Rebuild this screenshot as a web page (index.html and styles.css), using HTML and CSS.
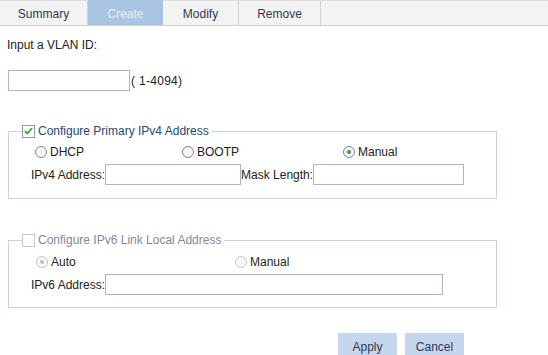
FILE: index.html
```html
<!DOCTYPE html>
<html>
  <head>
    <title>VLAN Interface</title>
    <link rel="stylesheet" href="styles.css">
  </head>
  <body>
    <div class="tabs">
      <div class="tab tab-summary">Summary</div>
      <div class="tab tab-create active">Create</div>
      <div class="tab tab-modify">Modify</div>
      <div class="tab tab-remove">Remove</div>
      <div class="tab-fill"></div>
    </div>

    <div class="content">
      <div class="prompt">Input a VLAN ID:</div>
      <div class="vlan-row">
        <input type="text" class="vlan-input" />
        <span class="hint">( 1-4094)</span>
      </div>

      <fieldset class="group group-v4">
        <legend>
          <span class="check checked">
            <svg width="9" height="8" viewBox="0 0 9 8"><path d="M1 4 L3.5 6.5 L8 1" fill="none" stroke="#3aa53a" stroke-width="1.8"/></svg>
          </span>
          Configure Primary IPv4 Address
        </legend>
        <div class="radios">
          <label class="radio r-dhcp"><span class="dot"></span>DHCP</label>
          <label class="radio r-bootp"><span class="dot"></span>BOOTP</label>
          <label class="radio r-manual"><span class="dot on"></span>Manual</label>
        </div>
        <div class="field-row">
          <span class="label">IPv4 Address:</span>
          <input type="text" class="ip-input" />
          <span class="label">Mask Length:</span>
          <input type="text" class="mask-input" />
        </div>
      </fieldset>

      <fieldset class="group group-v6 disabled">
        <legend>
          <span class="check"></span>
          Configure IPv6 Link Local Address
        </legend>
        <div class="radios">
          <label class="radio r-auto"><span class="dot dim on"></span>Auto</label>
          <label class="radio r-manual6"><span class="dot dim"></span>Manual</label>
        </div>
        <div class="field-row">
          <span class="label">IPv6 Address:</span>
          <input type="text" class="ip6-input" />
        </div>
      </fieldset>

      <div class="actions">
        <button class="btn">Apply</button>
        <button class="btn">Cancel</button>
      </div>
    </div>
  </body>
</html>
```

FILE: styles.css
```css
body {
  margin: 0;
  font-family: "Liberation Sans", Arial, sans-serif;
  font-size: 12px;
  color: #222;
  background: #fff;
}

.tabs {
  display: flex;
  height: 26px;
  background: #f3f3f3;
  border-top: 1px solid #dcdcdc;
  border-bottom: 1px solid #cfcfcf;
  box-sizing: border-box;
}

.tab {
  display: flex;
  align-items: center;
  justify-content: center;
  color: #2d3a56;
  border-right: 1px solid #d0d0d0;
  padding-top: 2px;
  box-sizing: border-box;
}

.tab-summary { width: 88px; }
.tab-create { width: 75px; }
.tab-modify { width: 76px; }
.tab-remove { width: 82px; }
.tab-fill { flex: 1; }

.tab.active {
  background: #a9c3e3;
  color: #e8eef7;
  border-right: none;
  margin-top: -1px;
}

.content {
  padding: 0 0 0 8px;
}

.prompt {
  margin-top: 12px;
  margin-left: -1px;
  height: 14px;
}

.vlan-row {
  display: flex;
  align-items: center;
  margin-top: 18px;
}

input[type="text"] {
  height: 21px;
  box-sizing: border-box;
  border: 1px solid #a7b6cb;
  margin: 0;
  padding: 0;
  background: #fff;
}

.vlan-input { width: 122px; height: 22px; }

.hint {
  margin-left: 1px;
  letter-spacing: 0.3px;
}

.group {
  width: 489px;
  box-sizing: border-box;
  margin: 0;
  border: 1px solid #c6d3e6;
  padding: 0 0 13px 22px;
}

.group-v4 {
  margin-top: 33px;
}

.group-v6 {
  margin-top: 34px;
  padding-bottom: 12px;
}

legend {
  padding: 0 3px 0 0;
  margin-left: -9px;
  color: #27457f;
  display: flex;
  align-items: center;
}

.disabled legend { color: #7f8aa0; }

.check {
  width: 11px;
  height: 11px;
  border: 1px solid #8b9bb3;
  background: #fff;
  margin-right: 3px;
  display: inline-flex;
  align-items: center;
  justify-content: center;
}

.disabled .check { border-color: #c8c8c8; }

.radios {
  display: flex;
  height: 18px;
  align-items: center;
  margin-top: 5px;
}

.group-v6 .radios { margin-top: 6px; }

.radio {
  display: flex;
  align-items: center;
  color: #222;
}

.r-dhcp { margin-left: 4px; width: 147px; }
.r-bootp { width: 161px; }
.r-auto { margin-left: 5px; width: 199px; }

.dot {
  width: 10px;
  height: 10px;
  border: 1px solid #7d8ba3;
  border-radius: 50%;
  background: #f4f4f4;
  margin-right: 3px;
  display: inline-flex;
  align-items: center;
  justify-content: center;
}

.dot.on::after {
  content: "";
  width: 4px;
  height: 4px;
  border-radius: 50%;
  background: #3e9b3e;
}

.dot.dim {
  border-color: #c9c9c9;
  background: #f7f7f7;
}

.dot.dim.on::after { background: #bdbdbd; }

.field-row {
  display: flex;
  align-items: center;
  margin-top: 3px;
}

.label { color: #222; }

.ip-input { width: 136px; }
.mask-input { width: 151px; }
.ip6-input { width: 338px; }

.actions {
  display: flex;
  margin-top: 25px;
  margin-left: 330px;
  gap: 8px;
}

.btn {
  width: 59px;
  height: 23px;
  border: none;
  background: #c6d6ee;
  color: #2d3a56;
  font-family: "Liberation Sans", Arial, sans-serif;
  font-size: 12px;
  padding: 4px 0 0 0;
}
```
